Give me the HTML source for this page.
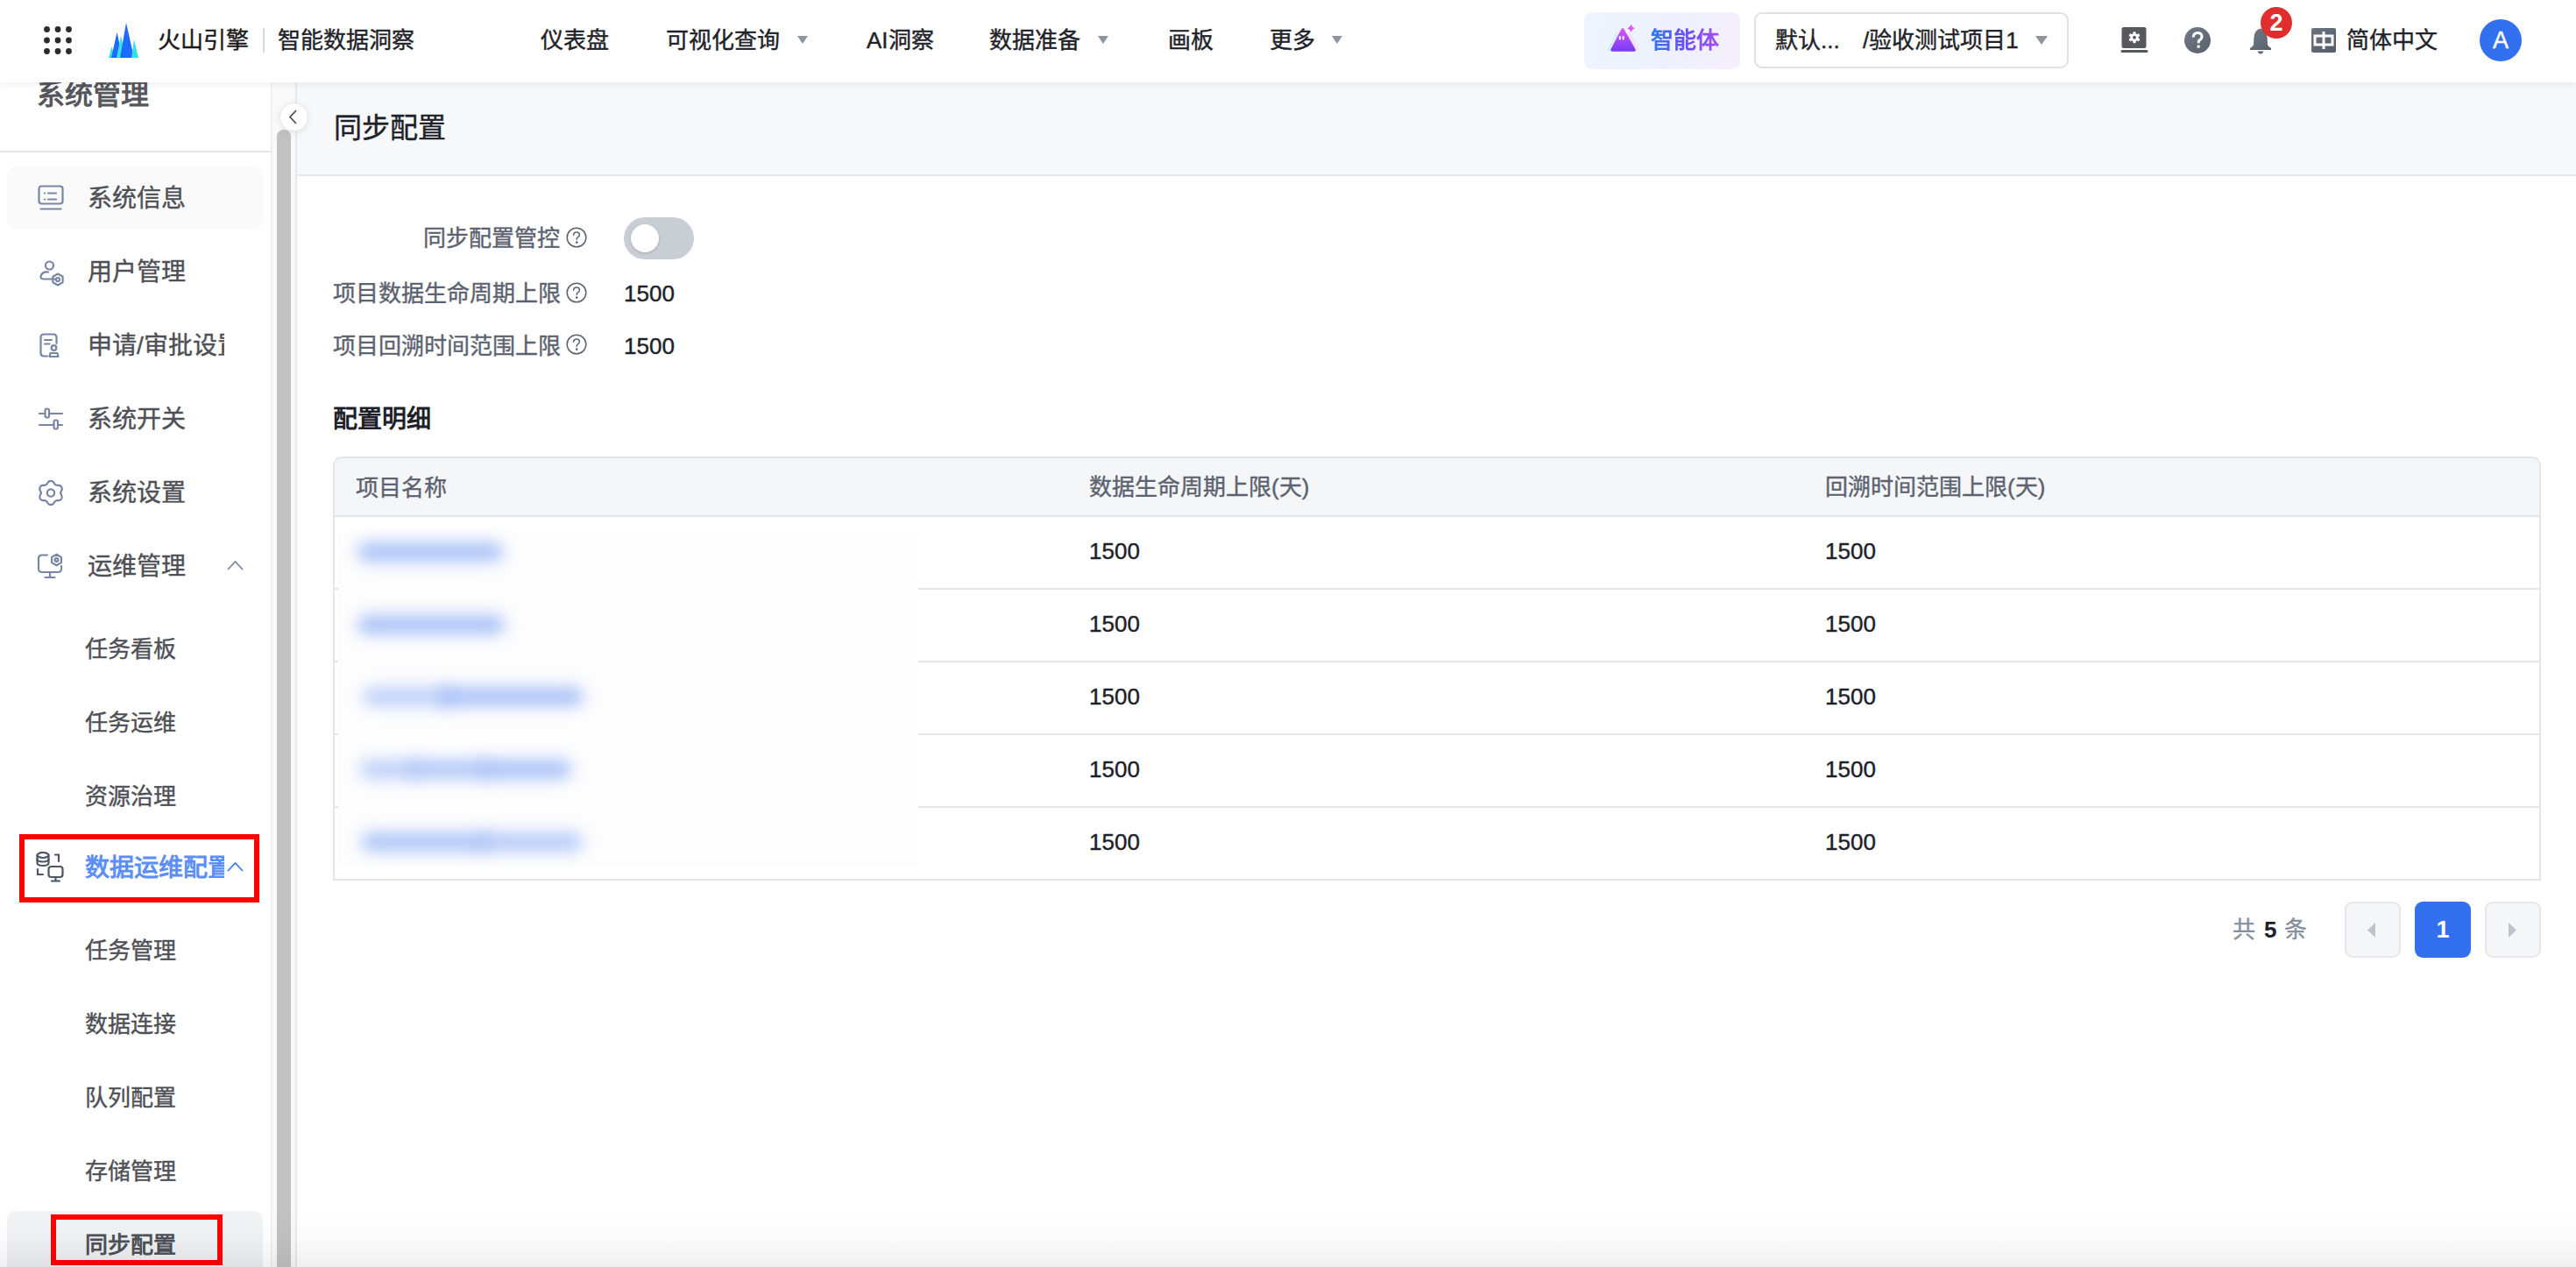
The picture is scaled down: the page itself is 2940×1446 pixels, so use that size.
<!DOCTYPE html>
<html lang="zh-CN">
<head>
<meta charset="utf-8">
<title>同步配置</title>
<style>
html,body{margin:0;padding:0;overflow:hidden;}
body{width:2940px;height:1446px;position:relative;overflow:hidden;background:#fff;font-family:"Liberation Sans",sans-serif;color:#1d2129;}
.a{-webkit-text-stroke:0.4px currentColor;}
.a{position:absolute;white-space:nowrap;}
.t26{font-size:26px;line-height:36px;}
.t28{font-size:28px;line-height:40px;}
/* header */
#hdr{position:absolute;left:0;top:0;width:2940px;height:94px;background:#fff;box-shadow:0 2px 8px rgba(0,0,0,0.07);z-index:10;}
.nav{color:#1f2329;}
.caret{position:absolute;width:0;height:0;border-left:6.5px solid transparent;border-right:6.5px solid transparent;border-top:9px solid #8f959e;}
/* sidebar */
#side{position:absolute;left:0;top:94px;width:309px;height:1352px;background:#fff;border-right:2px solid #e8e9ed;overflow:hidden;}
.si{color:#4e5056;}
#track{position:absolute;left:310px;top:94px;width:27px;height:1352px;background:#f9f9f9;}
#thumb{position:absolute;left:316px;top:148px;width:16px;height:1320px;background:#c1c1c1;border-radius:8px;}
#cline{position:absolute;left:337px;top:94px;width:2px;height:1352px;background:#e8e9ee;}
/* content */
#phead{position:absolute;left:339px;top:94px;width:2601px;height:105px;background:#f7f8fa;border-bottom:2px solid #e5e6eb;}
.lbl{color:#5c6370;}
</style>
</head>
<body>
<!-- HEADER -->
<div id="hdr">
  <svg class="a" style="left:50px;top:30px" width="33" height="33" viewBox="0 0 33 33">
    <g fill="#2b2b2b">
      <circle cx="3.5" cy="3.5" r="3.4"/><circle cx="16" cy="3.5" r="3.4"/><circle cx="28.5" cy="3.5" r="3.4"/>
      <circle cx="3.5" cy="16" r="3.4"/><circle cx="16" cy="16" r="3.4"/><circle cx="28.5" cy="16" r="3.4"/>
      <circle cx="3.5" cy="28.5" r="3.4"/><circle cx="16" cy="28.5" r="3.4"/><circle cx="28.5" cy="28.5" r="3.4"/>
    </g>
  </svg>
  <svg class="a" style="left:124px;top:26px" width="35" height="40" viewBox="0 0 35 40">
    <polygon points="0,40 3.5,27 7,40" fill="#37e0dc"/>
    <polygon points="3,40 9.5,11 16,40" fill="#1e6bff"/>
    <polygon points="9,40 14,15 20,40" fill="#37e0dc"/>
    <polygon points="13,40 20,0 29,40" fill="#1e6bff"/>
    <polygon points="26,40 29,19 34,40" fill="#37e0dc"/>
  </svg>
  <div class="a t26 nav" style="left:180px;top:28px;font-weight:500;color:#1a1a1a">火山引擎</div>
  <div class="a" style="left:300px;top:32px;width:2px;height:28px;background:#d5d8de"></div>
  <div class="a t26 nav" style="left:317px;top:28px">智能数据洞察</div>

  <div class="a t26 nav" style="left:617px;top:28px">仪表盘</div>
  <div class="a t26 nav" style="left:760px;top:28px">可视化查询</div>
  <div class="caret" style="left:910px;top:41px"></div>
  <div class="a t26 nav" style="left:989px;top:28px">AI洞察</div>
  <div class="a t26 nav" style="left:1129px;top:28px">数据准备</div>
  <div class="caret" style="left:1253px;top:41px"></div>
  <div class="a t26 nav" style="left:1333px;top:28px">画板</div>
  <div class="a t26 nav" style="left:1449px;top:28px">更多</div>
  <div class="caret" style="left:1520px;top:41px"></div>

  <!-- agent button -->
  <div class="a" style="left:1808px;top:14px;width:178px;height:65px;border-radius:9px;background:linear-gradient(100deg,#eef5fe 0%,#eef1fd 55%,#f6effd 100%)"></div>
  <svg class="a" style="left:1832px;top:26px" width="42" height="34" viewBox="0 0 42 34">
    <defs>
      <linearGradient id="ag" x1="0" y1="0" x2="0" y2="1"><stop offset="0" stop-color="#cf55f6"/><stop offset="1" stop-color="#7b3cf5"/></linearGradient>
    </defs>
    <path d="M3,31 L13,12 L22,31 Z" fill="#cdeefb" stroke="#cdeefb" stroke-width="2" stroke-linejoin="round" opacity="0.75"/>
    <path d="M19,31 L28,12 L38,31 Z" fill="#f6dcfb" stroke="#f6dcfb" stroke-width="2" stroke-linejoin="round" opacity="0.75"/>
    <path d="M8,31 L20,8 L33,31 Z" fill="url(#ag)" stroke="url(#ag)" stroke-width="3.5" stroke-linejoin="round"/>
    <rect x="15.8" y="15" width="2" height="4.5" rx="1" fill="#fff"/>
    <rect x="19.6" y="15" width="2" height="4.5" rx="1" fill="#fff"/>
    <path d="M29.5,1.5 Q30.3,5.2 34,6.3 Q30.3,7.4 29.5,11.2 Q28.7,7.4 25,6.3 Q28.7,5.2 29.5,1.5 Z" fill="#d85cf4"/>
  </svg>
  <div class="a t26" style="left:1884px;top:28px;font-weight:700;background:linear-gradient(90deg,#2c7bf6,#6b4ef5 50%,#a24df4);-webkit-background-clip:text;background-clip:text;color:transparent;-webkit-text-stroke:0">智能体</div>

  <!-- project select -->
  <div class="a" style="left:2002px;top:14px;width:355px;height:60px;border:2px solid #dfe1e6;border-radius:9px;background:#fff"></div>
  <div class="a t26 nav" style="left:2026px;top:28px">默认...</div>
  <div class="a t26 nav" style="left:2126px;top:28px">/验收测试项目1</div>
  <div class="caret" style="left:2323px;top:41px;border-left-width:7px;border-right-width:7px;border-top-width:10px"></div>

  <!-- icons -->
  <svg class="a" style="left:2420px;top:30px" width="32" height="32" viewBox="0 0 32 32">
    <rect x="1.5" y="1" width="28" height="24" rx="2.5" fill="#58595c"/>
    <rect x="0.5" y="27" width="31" height="3" rx="1.5" fill="#58595c"/>
    <g transform="translate(16,12.75)" fill="#fff">
      <circle r="4.6"/>
      <rect x="-1.6" y="-6.6" width="3.2" height="13.2" rx="0.8"/>
      <rect x="-1.6" y="-6.6" width="3.2" height="13.2" rx="0.8" transform="rotate(60)"/>
      <rect x="-1.6" y="-6.6" width="3.2" height="13.2" rx="0.8" transform="rotate(120)"/>
    </g>
    <circle cx="16" cy="12.75" r="1.9" fill="#58595c"/>
  </svg>
  <svg class="a" style="left:2493px;top:31px" width="30" height="30" viewBox="0 0 30 30">
    <defs><linearGradient id="qg" x1="0" y1="0" x2="1" y2="1"><stop offset="0" stop-color="#737b88"/><stop offset="1" stop-color="#575f6b"/></linearGradient></defs>
    <circle cx="15" cy="15" r="15" fill="url(#qg)"/>
    <path d="M10.3,11.6 Q10.3,6.6 15.2,6.6 Q20,6.6 20,10.8 Q20,13.2 17.6,14.6 Q16.2,15.4 16.2,17.2 L16.2,18.3" stroke="#fff" stroke-width="3" fill="none" stroke-linecap="butt"/>
    <rect x="14.6" y="20.6" width="3.1" height="3.1" fill="#fff"/>
  </svg>
  <svg class="a" style="left:2567px;top:31px" width="26" height="31" viewBox="0 0 26 31">
    <defs><linearGradient id="bg" x1="0" y1="0" x2="1" y2="1"><stop offset="0" stop-color="#737b88"/><stop offset="1" stop-color="#575f6b"/></linearGradient></defs>
    <path d="M13,1.5 Q20,3 20.6,12 L21,20 Q21.5,22 25,24 L25,26 L1,26 L1,24 Q4.5,22 5,20 L5.4,12 Q6,3 13,1.5 Z" fill="url(#bg)"/>
    <path d="M9.5,27.5 L16.5,27.5 Q15.5,30.5 13,30.5 Q10.5,30.5 9.5,27.5 Z" fill="#5f6773"/>
  </svg>
  <div class="a" style="left:2580px;top:8px;width:36px;height:36px;border-radius:50%;background:#e02e2e;color:#fff;font-weight:700;font-size:27px;line-height:36px;text-align:center;-webkit-text-stroke:0">2</div>
  <svg class="a" style="left:2638px;top:32px" width="28" height="28" viewBox="0 0 28 28">
    <defs><linearGradient id="zg" x1="0" y1="0" x2="1" y2="1"><stop offset="0" stop-color="#6b7380"/><stop offset="1" stop-color="#545c68"/></linearGradient></defs>
    <rect width="28" height="28" rx="2" fill="url(#zg)"/>
    <rect x="4" y="9" width="20" height="10" fill="none" stroke="#fff" stroke-width="3"/>
    <rect x="12.5" y="4" width="3" height="20" fill="#fff"/>
  </svg>
  <div class="a t26 nav" style="left:2678px;top:28px">简体中文</div>
  <div class="a" style="left:2830px;top:22px;width:48px;height:48px;border-radius:50%;background:#3370f0;color:#fff;font-size:27px;line-height:48px;text-align:center;font-weight:400">A</div>
</div>

<!-- SIDEBAR -->
<div id="side">
  <div class="a" style="left:42px;top:-8px;font-size:32px;line-height:44px;font-weight:600;color:#55575d;-webkit-text-stroke:0">系统管理</div>
  <div class="a" style="left:0;top:78px;width:309px;height:2px;background:#e5e6eb"></div>
</div>
<div class="a" style="left:8px;top:190px;width:292px;height:72px;border-radius:10px;background:#fafafb"></div>
<!-- icons -->
<svg class="a" style="left:43px;top:211px" width="30" height="30" viewBox="0 0 30 30" fill="none" stroke="#7886a3" stroke-width="2.2" stroke-linecap="round">
  <rect x="1.5" y="1.5" width="27" height="20" rx="3"/>
  <line x1="8" y1="16.5" x2="8.2" y2="16.5"/><line x1="12" y1="16.5" x2="21" y2="16.5"/>
  <line x1="8" y1="9.5" x2="8.2" y2="9.5"/><line x1="12" y1="9.5" x2="21" y2="9.5"/>
  <line x1="3.5" y1="27.5" x2="26.5" y2="27.5"/>
</svg>
<svg class="a" style="left:43px;top:295px" width="32" height="32" viewBox="0 0 32 32" fill="none" stroke="#7886a3" stroke-width="2.2" stroke-linecap="round">
  <circle cx="13.5" cy="8" r="4.5"/>
  <path d="M20,23.5 L7,23.5 Q3,23.5 3.5,20.5 Q5,14.5 12,15.5"/>
  <g transform="translate(23,24)"><path d="M0,-6.5 L5.6,-3.25 L5.6,3.25 L0,6.5 L-5.6,3.25 L-5.6,-3.25 Z" stroke-linejoin="round"/><circle r="2"/></g>
</svg>
<svg class="a" style="left:45px;top:380px" width="28" height="30" viewBox="0 0 28 30" fill="none" stroke="#7886a3" stroke-width="2.2" stroke-linecap="round">
  <path d="M9,26.5 L5,26.5 Q1.5,26.5 1.5,23 L1.5,5 Q1.5,1.5 5,1.5 L16,1.5 Q19.5,1.5 19.5,5 L19.5,12"/>
  <line x1="6" y1="8" x2="14" y2="8"/><line x1="6" y1="12.5" x2="11.5" y2="12.5"/>
  <circle cx="16.5" cy="17" r="2.8"/>
  <path d="M11.5,27 L12.5,23 L20.5,23 L21.5,27 Z" stroke-linejoin="round"/>
</svg>
<svg class="a" style="left:43px;top:464px" width="30" height="30" viewBox="0 0 30 30" fill="none" stroke="#7886a3" stroke-width="2.2" stroke-linecap="round">
  <line x1="2" y1="8" x2="8" y2="8"/><line x1="13" y1="8" x2="28" y2="8"/>
  <rect x="8.5" y="2.5" width="4.5" height="10" rx="2"/>
  <line x1="2" y1="21" x2="18" y2="21"/><line x1="23" y1="21" x2="28" y2="21"/>
  <rect x="18.5" y="15.5" width="4.5" height="10" rx="2"/>
</svg>
<svg class="a" style="left:43px;top:547px" width="30" height="31" viewBox="0 0 30 31" fill="none" stroke="#7886a3" stroke-width="2.2" stroke-linejoin="round">
  <path d="M15,1.8 Q17,1.8 18.2,3.5 L19.5,5.5 Q20.5,6.8 22.5,6.8 L24.5,6.8 Q26.8,7.2 27.6,9.5 Q28.2,11.5 27,13.2 L26,15.5 L27,17.8 Q28.2,19.5 27.6,21.5 Q26.8,23.8 24.5,24.2 L22.5,24.2 Q20.5,24.2 19.5,25.5 L18.2,27.5 Q17,29.2 15,29.2 Q13,29.2 11.8,27.5 L10.5,25.5 Q9.5,24.2 7.5,24.2 L5.5,24.2 Q3.2,23.8 2.4,21.5 Q1.8,19.5 3,17.8 L4,15.5 L3,13.2 Q1.8,11.5 2.4,9.5 Q3.2,7.2 5.5,6.8 L7.5,6.8 Q9.5,6.8 10.5,5.5 L11.8,3.5 Q13,1.8 15,1.8 Z"/>
  <circle cx="15" cy="15.5" r="4.2"/>
</svg>
<svg class="a" style="left:42px;top:630px" width="32" height="32" viewBox="0 0 32 32" fill="none" stroke="#7886a3" stroke-width="2.2" stroke-linecap="round">
  <path d="M12,3.5 L6,3.5 Q2,3.5 2,7.5 L2,19 Q2,23 6,23 L24,23 Q28,23 28,19 L28,16"/>
  <line x1="15" y1="23" x2="15" y2="29"/><line x1="9.5" y1="29" x2="20.5" y2="29"/>
  <g transform="translate(22.5,9)"><path d="M0,-6.3 L5.4,-3.15 L5.4,3.15 L0,6.3 L-5.4,3.15 L-5.4,-3.15 Z" stroke-linejoin="round"/><circle r="1.9"/></g>
</svg>
<svg class="a" style="left:259px;top:639px" width="19" height="12" viewBox="0 0 19 12" fill="none" stroke="#7886a3" stroke-width="1.8"><path d="M1,11 L9.5,2 L18,11"/></svg>
<!-- data ops icon -->
<svg class="a" style="left:41px;top:972px" width="32" height="35" viewBox="0 0 32 35" fill="none" stroke="#4e5565" stroke-width="2.2" stroke-linecap="round">
  <ellipse cx="8" cy="4" rx="6.5" ry="3"/>
  <path d="M1.5,4 L1.5,13 Q1.5,16 8,16 Q14.5,16 14.5,13 L14.5,4"/>
  <path d="M1.5,8.5 Q1.5,11.5 8,11.5 Q14.5,11.5 14.5,8.5"/>
  <path d="M22,3.5 L26,3.5 L26,11"/>
  <path d="M2,20 L2,26 L8,26"/>
  <rect x="14.5" y="17" width="16" height="12" rx="3"/>
  <line x1="22.5" y1="29" x2="22.5" y2="33"/><line x1="18" y1="33.5" x2="27" y2="33.5"/>
</svg>
<svg class="a" style="left:259px;top:983px" width="19" height="12" viewBox="0 0 19 12" fill="none" stroke="#3b7cf5" stroke-width="1.8"><path d="M1,11 L9.5,2 L18,11"/></svg>

<div class="a si t28" style="left:100px;top:207px">系统信息</div>
<div class="a si t28" style="left:100px;top:291px">用户管理</div>
<div class="a" style="left:100px;top:375px;width:156px;overflow:hidden"><div class="si t28">申请/审批设置</div></div>
<div class="a si t28" style="left:100px;top:459px">系统开关</div>
<div class="a si t28" style="left:100px;top:543px">系统设置</div>
<div class="a si t28" style="left:100px;top:627px">运维管理</div>
<div class="a si t26" style="left:97px;top:723px">任务看板</div>
<div class="a si t26" style="left:97px;top:807px">任务运维</div>
<div class="a si t26" style="left:97px;top:891px">资源治理</div>
<div class="a" style="left:97px;top:971px;width:159px;overflow:hidden"><div class="t28" style="color:#5b8ef7;font-weight:700;-webkit-text-stroke:0">数据运维配置</div></div>
<div class="a si t26" style="left:97px;top:1067px">任务管理</div>
<div class="a si t26" style="left:97px;top:1151px">数据连接</div>
<div class="a si t26" style="left:97px;top:1235px">队列配置</div>
<div class="a si t26" style="left:97px;top:1319px">存储管理</div>
<div class="a" style="left:8px;top:1382px;width:292px;height:80px;border-radius:10px;background:linear-gradient(180deg,#f3f4f6,#eceef1)"></div>
<div class="a t26" style="left:97px;top:1403px;font-weight:700;color:#4e5158;-webkit-text-stroke:0">同步配置</div>
<div class="a" style="left:22px;top:952px;width:262px;height:66px;border:6px solid #ff0000"></div>
<div class="a" style="left:58px;top:1386px;width:184px;height:46px;border:6px solid #ff0000"></div>
<div id="track"></div>
<div id="thumb"></div>
<div id="cline"></div>

<!-- CONTENT -->
<div id="phead"></div>
<div class="a" style="left:319px;top:117px;width:31px;height:31px;border-radius:50%;background:#fff;border:1px solid #e6e7ec;box-shadow:0 2px 8px rgba(0,0,0,0.08);z-index:5"></div>
<svg class="a" style="left:329px;top:124px;z-index:6" width="12" height="20" viewBox="0 0 12 20" fill="none" stroke="#4e5056" stroke-width="1.8"><path d="M9,2 L2,9.5 L9,17"/></svg>
<div class="a" style="left:381px;top:124px;font-size:32px;line-height:44px;color:#1d2129">同步配置</div>

<div class="a t26 lbl" style="left:483px;top:254px">同步配置管控</div>
<div class="a t26 lbl" style="left:380px;top:317px">项目数据生命周期上限</div>
<div class="a t26 lbl" style="left:380px;top:377px">项目回溯时间范围上限</div>
<svg class="a" style="left:646px;top:259px" width="24" height="24" viewBox="0 0 24 24" fill="none" stroke="#5c6370" stroke-width="1.5"><circle cx="12" cy="12" r="10.8"/><path d="M8.6,9.3 Q8.6,5.9 12,5.9 Q15.4,5.9 15.4,8.9 Q15.4,10.6 13.6,11.6 Q12.2,12.4 12.2,14.2" stroke-linecap="round"/><circle cx="12.2" cy="17.6" r="0.6" fill="#5c6370"/></svg>
<svg class="a" style="left:646px;top:322px" width="24" height="24" viewBox="0 0 24 24" fill="none" stroke="#5c6370" stroke-width="1.5"><circle cx="12" cy="12" r="10.8"/><path d="M8.6,9.3 Q8.6,5.9 12,5.9 Q15.4,5.9 15.4,8.9 Q15.4,10.6 13.6,11.6 Q12.2,12.4 12.2,14.2" stroke-linecap="round"/><circle cx="12.2" cy="17.6" r="0.6" fill="#5c6370"/></svg>
<svg class="a" style="left:646px;top:381px" width="24" height="24" viewBox="0 0 24 24" fill="none" stroke="#5c6370" stroke-width="1.5"><circle cx="12" cy="12" r="10.8"/><path d="M8.6,9.3 Q8.6,5.9 12,5.9 Q15.4,5.9 15.4,8.9 Q15.4,10.6 13.6,11.6 Q12.2,12.4 12.2,14.2" stroke-linecap="round"/><circle cx="12.2" cy="17.6" r="0.6" fill="#5c6370"/></svg>
<div class="a" style="left:712px;top:248px;width:80px;height:48px;border-radius:24px;background:#c9cdd4"></div>
<div class="a" style="left:720px;top:256px;width:32px;height:32px;border-radius:50%;background:#fff;box-shadow:0 1px 3px rgba(0,0,0,0.18)"></div>
<div class="a t26" style="left:712px;top:317px;color:#1d2129">1500</div>
<div class="a t26" style="left:712px;top:377px;color:#1d2129">1500</div>

<div class="a" style="left:380px;top:459px;font-size:28px;line-height:40px;font-weight:700;color:#1d2129;-webkit-text-stroke:0">配置明细</div>

<!-- table -->
<div class="a" style="left:380px;top:521px;width:2516px;height:480px;border:2px solid #e3e5ea;border-radius:10px 10px 0 0;overflow:hidden;background:#fff">
  <div class="a" style="left:0;top:0;width:2516px;height:65px;background:#f5f6f8;border-bottom:2px solid #e3e5ea"></div>
  <div class="a" style="left:0;top:148px;width:2516px;height:2px;background:#e5e6eb"></div>
  <div class="a" style="left:0;top:231px;width:2516px;height:2px;background:#e5e6eb"></div>
  <div class="a" style="left:0;top:314px;width:2516px;height:2px;background:#e5e6eb"></div>
  <div class="a" style="left:0;top:397px;width:2516px;height:2px;background:#e5e6eb"></div>
</div>
<div class="a t26 lbl" style="left:406px;top:539px">项目名称</div>
<div class="a t26 lbl" style="left:1243px;top:538px">数据生命周期上限(天)</div>
<div class="a t26 lbl" style="left:2083px;top:538px">回溯时间范围上限(天)</div>
<div class="a t26" style="left:1243px;top:611px">1500</div>
<div class="a t26" style="left:2083px;top:611px">1500</div>
<div class="a t26" style="left:1243px;top:694px">1500</div>
<div class="a t26" style="left:2083px;top:694px">1500</div>
<div class="a t26" style="left:1243px;top:777px">1500</div>
<div class="a t26" style="left:2083px;top:777px">1500</div>
<div class="a t26" style="left:1243px;top:860px">1500</div>
<div class="a t26" style="left:2083px;top:860px">1500</div>
<div class="a t26" style="left:1243px;top:943px">1500</div>
<div class="a t26" style="left:2083px;top:943px">1500</div>

<!-- blurred names -->
<div class="a" style="left:386px;top:606px;width:662px;height:382px;background:#fdfdfe"></div>
<div class="a" style="left:408px;top:619px;width:166px;height:22px;border-radius:11px;background:#a6bff6;opacity:0.95;filter:blur(9px)"></div>
<div class="a" style="left:408px;top:702px;width:168px;height:22px;border-radius:11px;background:#a6bff6;opacity:0.95;filter:blur(9px)"></div>
<div class="a" style="left:414px;top:784px;width:106px;height:22px;border-radius:11px;background:#a6bff6;opacity:0.7;filter:blur(9px)"></div>
<div class="a" style="left:500px;top:784px;width:166px;height:22px;border-radius:11px;background:#a6bff6;opacity:0.95;filter:blur(9px)"></div>
<div class="a" style="left:410px;top:867px;width:70px;height:22px;border-radius:11px;background:#a6bff6;opacity:0.7;filter:blur(9px)"></div>
<div class="a" style="left:465px;top:867px;width:95px;height:22px;border-radius:11px;background:#a6bff6;opacity:0.85;filter:blur(9px)"></div>
<div class="a" style="left:545px;top:867px;width:107px;height:22px;border-radius:11px;background:#a6bff6;opacity:0.95;filter:blur(9px)"></div>
<div class="a" style="left:412px;top:950px;width:148px;height:22px;border-radius:11px;background:#a6bff6;opacity:0.9;filter:blur(9px)"></div>
<div class="a" style="left:545px;top:950px;width:120px;height:22px;border-radius:11px;background:#a6bff6;opacity:0.8;filter:blur(9px)"></div>

<!-- pagination -->
<div class="a t26" style="left:2548px;top:1043px;color:#86909c">共<span style="color:#1d2129;font-weight:700;margin:0 9px 0 10px;-webkit-text-stroke:0">5</span>条</div>
<div class="a" style="left:2676px;top:1029px;width:60px;height:60px;border:2px solid #e5e6eb;border-radius:9px;background:#f5f6f8"></div>
<svg class="a" style="left:2702px;top:1053px" width="10" height="18" viewBox="0 0 10 18"><path d="M9,0 L9,17 L0,8.5 Z" fill="#bfc4cc"/></svg>
<div class="a" style="left:2756px;top:1029px;width:64px;height:64px;border-radius:9px;background:#3370f0;color:#fff;font-size:27px;line-height:64px;text-align:center;font-weight:700;-webkit-text-stroke:0">1</div>
<div class="a" style="left:2836px;top:1029px;width:60px;height:60px;border:2px solid #e5e6eb;border-radius:9px;background:#f5f6f8"></div>
<svg class="a" style="left:2863px;top:1053px" width="10" height="18" viewBox="0 0 10 18"><path d="M0,0 L0,17 L9,8.5 Z" fill="#bfc4cc"/></svg>

<div class="a" style="left:0;top:1376px;width:2940px;height:70px;background:linear-gradient(180deg,rgba(0,0,0,0) 0%,rgba(0,0,0,0.012) 50%,rgba(0,0,0,0.06) 100%);z-index:20;pointer-events:none"></div>
</body>
</html>
